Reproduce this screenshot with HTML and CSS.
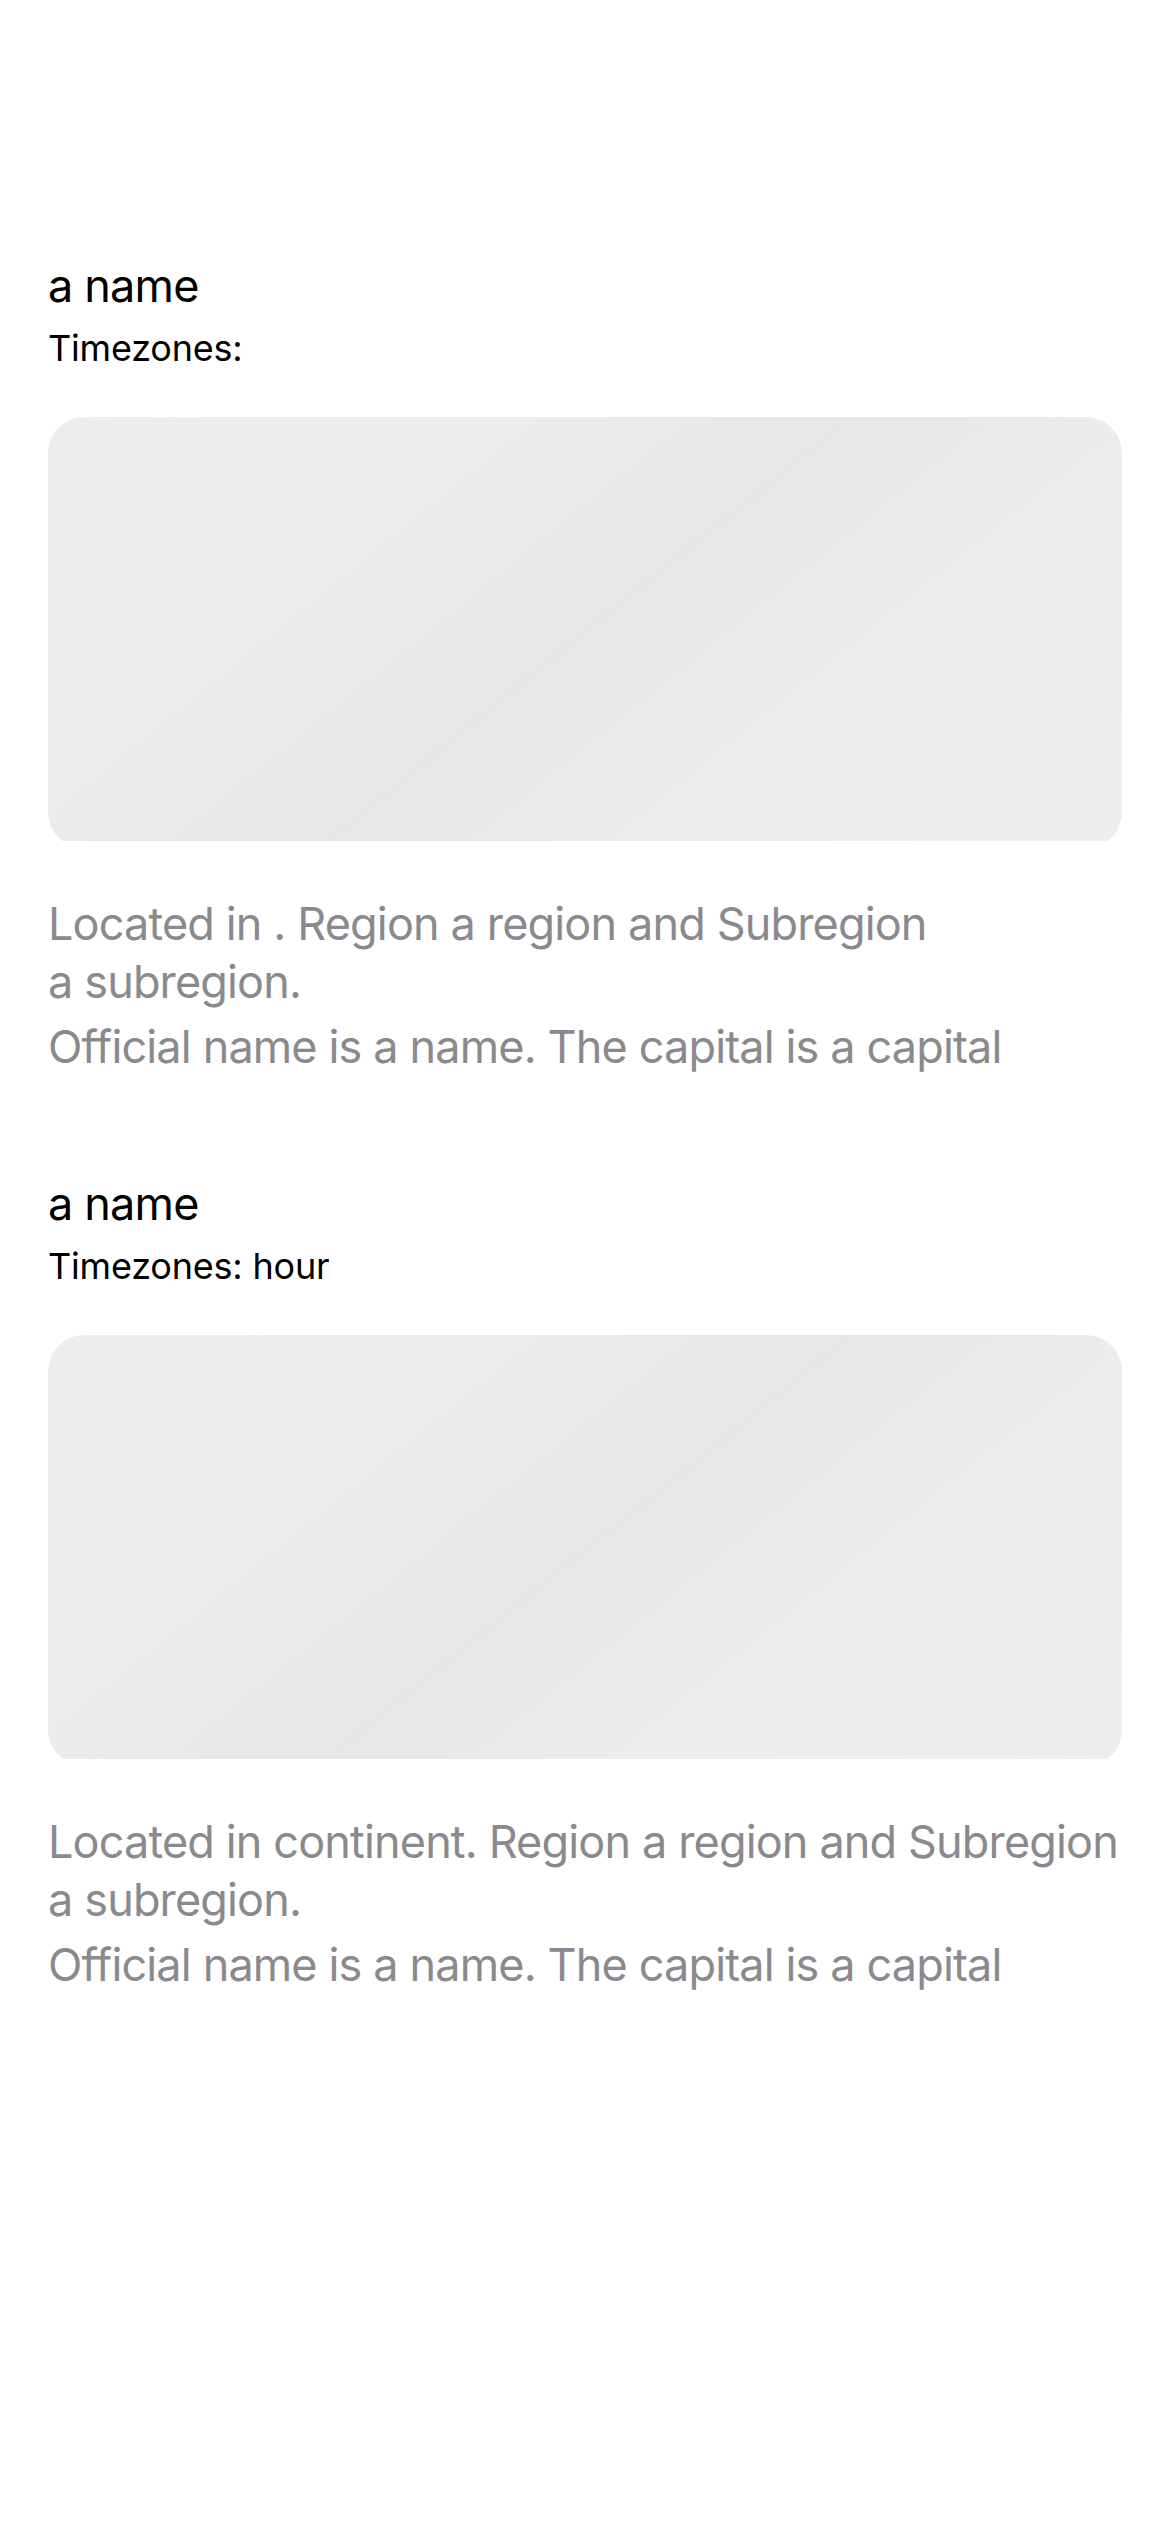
FILE: index.html
```html
<!DOCTYPE html>
<html lang="en">
<head>
<meta charset="utf-8">
<title>Countries</title>
<link rel="stylesheet" href="styles.css">
</head>
<body>
<main class="list">
  <section class="item">
    <h2 class="name">a name</h2>
    <p class="zones">Timezones: </p>
    <div class="flag-clip"><div class="flag"></div></div>
    <div class="desc">
      <p>Located in . Region a region and Subregion a&nbsp;subregion.</p>
      <p class="official">Official name is a name. The capital is a capital</p>
    </div>
  </section>
  <section class="item">
    <h2 class="name">a name</h2>
    <p class="zones">Timezones: hour</p>
    <div class="flag-clip"><div class="flag"></div></div>
    <div class="desc">
      <p>Located in continent. Region a region and Subregion a&nbsp;subregion.</p>
      <p class="official">Official name is a name. The capital is a capital</p>
    </div>
  </section>
</main>
</body>
</html>
```
FILE: styles.css
```css
html, body {
  margin: 0;
  padding: 0;
  background: #ffffff;
}

body {
  font-family: Inter, "Noto Sans", "Liberation Sans", sans-serif;
  color: #000;
}

.list {
  padding: 257px 48px 0 48px;
  display: flex;
  flex-direction: column;
  gap: 99px;
}

.item {
  display: flex;
  flex-direction: column;
}

.name {
  margin: 0;
  font-size: 45px;
  font-weight: 400;
  line-height: 58px;
  letter-spacing: -0.8px;
}

.zones {
  margin: 12px 0 0 0;
  font-size: 36px;
  line-height: 42px;
  letter-spacing: -0.2px;
}

.flag-clip {
  margin-top: 48px;
  height: 424px;
  overflow: hidden;
}

.flag {
  height: 431px;
  border-radius: 36px;
  background: linear-gradient(141deg, #ededed 0%, #ececec 30%, #e7e7e7 50%, #ececec 68%, #eeeeee 100%);
}

.desc {
  margin-top: 54px;
  color: #8a8a8e;
  font-size: 45px;
  line-height: 58px;
  letter-spacing: -0.85px;
}

.desc p {
  margin: 0;
}

.desc .official {
  margin-top: 7px;
}
```
